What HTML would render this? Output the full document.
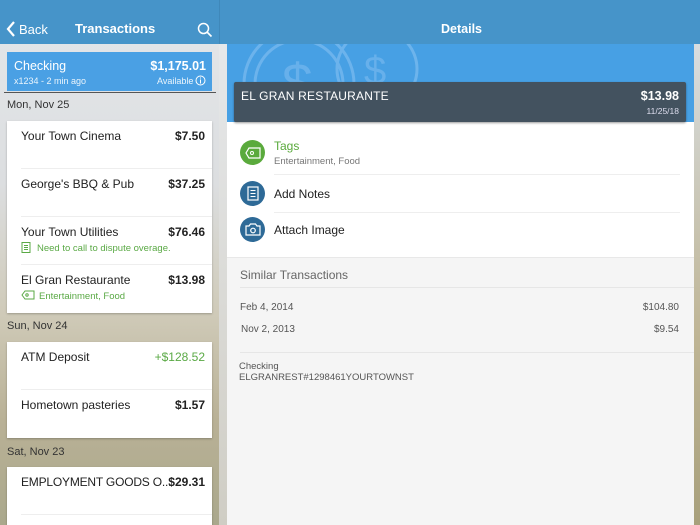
<!DOCTYPE html>
<html><head><meta charset="utf-8"><style>
*{margin:0;padding:0;box-sizing:border-box}
html,body{width:700px;height:525px;overflow:hidden}
body{font-family:"Liberation Sans",sans-serif;position:relative;background:#ddd}
.abs{position:absolute}
.left{left:0;top:0;width:219px;height:525px;background:linear-gradient(#e4e7ea 0%,#dcdee0 35%,#cfcab8 60%,#b9b196 80%,#aaa88c 100%)}
.sep{left:219px;top:44px;width:8px;height:481px;background:linear-gradient(#e6e8ea,#cfcdc4)}
.topbar{left:0;top:0;width:700px;height:44px;background:#4694c9}
.card{position:absolute;left:7px;width:205px;background:#fff;box-shadow:0 1px 2px rgba(0,0,0,.25)}
.row{position:relative;height:48px;border-bottom:1px solid #eee;margin-left:14px}
.row:last-child{border-bottom:none}
.row .n{position:absolute;left:0;top:8px;font-size:12px;color:#222}
.row .a{position:absolute;right:7px;top:8px;font-size:12px;color:#222;font-weight:bold}
.row .s{position:absolute;left:0;top:25px;font-size:9.5px;color:#5aa945}
.date{position:absolute;left:7px;font-size:11px;color:#333}
</style></head><body>
<div class="abs left"></div>
<div class="abs sep"></div>
<div class="abs" style="left:694px;top:44px;width:6px;height:481px;background:linear-gradient(#d8dde0,#bfb595 60%,#a8a07c)"></div>
<div class="abs topbar"></div>
<div class="abs" style="left:219px;top:0;width:1px;height:44px;background:#3f88ba"></div>
<svg class="abs" style="left:6px;top:21px" width="10" height="16"><path d="M8 1 L2 8 L8 15" stroke="#fff" stroke-width="2.2" fill="none"/></svg>
<div class="abs" style="left:19px;top:22px;font-size:13px;color:#fff">Back</div>
<div class="abs" style="left:75px;top:21px;font-size:13px;color:#fff;font-weight:bold">Transactions</div>
<svg class="abs" style="left:197px;top:22px" width="16" height="16"><circle cx="6.5" cy="6.5" r="5" stroke="#fff" stroke-width="1.5" fill="none"/><path d="M10 10 L14.5 14.5" stroke="#fff" stroke-width="1.6"/></svg>
<div class="abs" style="left:441px;top:22px;font-size:12.5px;color:#fff;font-weight:bold">Details</div>

<div class="abs" style="left:7px;top:52px;width:205px;height:39px;background:#4aa0e4"></div>
<div class="abs" style="left:14px;top:59px;font-size:12.5px;color:#fff">Checking</div>
<div class="abs" style="left:14px;top:76px;font-size:9px;color:#eaf4fc">x1234 - 2 min ago</div>
<div class="abs" style="right:494px;top:59px;font-size:12.5px;color:#fff;font-weight:bold">$1,175.01</div>
<div class="abs" style="left:157px;top:76px;font-size:9px;color:#eaf4fc">Available</div>
<svg class="abs" style="left:195px;top:75px" width="11" height="11"><circle cx="5.5" cy="5.5" r="4.5" stroke="#fff" fill="none"/><path d="M5.5 4.5v4M5.5 2.5v1" stroke="#fff"/></svg>
<div class="abs" style="left:4px;top:92px;width:212px;height:1px;background:#555"></div>

<div class="date" style="top:99px">Mon, Nov 25</div>
<div class="card" style="top:121px">
<div class="row"><span class="n">Your Town Cinema</span><span class="a">$7.50</span></div>
<div class="row"><span class="n">George's BBQ &amp; Pub</span><span class="a">$37.25</span></div>
<div class="row"><span class="n">Your Town Utilities</span><span class="a">$76.46</span><span class="s"><svg width="10" height="11" style="vertical-align:-2px;margin-right:6px"><rect x="1" y="0.5" width="8" height="10" stroke="#5aa945" fill="none"/><path d="M3 3.5h4M3 5.5h4M3 7.5h4" stroke="#5aa945"/></svg>Need to call to dispute overage.</span></div>
<div class="row"><span class="n">El Gran Restaurante</span><span class="a">$13.98</span><span class="s"><svg width="14" height="10" style="vertical-align:-1px;margin-right:4px"><path d="M4 1h9v8H4L1 5z" stroke="#5aa945" fill="none"/><circle cx="6" cy="5" r="1.2" stroke="#5aa945" fill="none"/></svg>Entertainment, Food</span></div>
</div>
<div class="date" style="top:320px">Sun, Nov 24</div>
<div class="card" style="top:342px">
<div class="row"><span class="n">ATM Deposit</span><span class="a" style="color:#5aa945;font-weight:normal">+$128.52</span></div>
<div class="row"><span class="n">Hometown pasteries</span><span class="a">$1.57</span></div>
</div>
<div class="date" style="top:446px">Sat, Nov 23</div>
<div class="card" style="top:467px;height:58px;overflow:hidden">
<div class="row" style="border-bottom:1px solid #eee"><span class="n" style="letter-spacing:-.2px">EMPLOYMENT GOODS O...</span><span class="a">$29.31</span></div>
</div>

<div class="abs" style="left:227px;top:44px;width:467px;height:481px;background:#f5f5f5"></div>
<div class="abs" style="left:227px;top:44px;width:467px;height:78px;background:#47a0e4;overflow:hidden">
<svg width="467" height="78"><g fill="none" stroke="#7dbcf0" stroke-width="3" opacity=".7"><circle cx="72" cy="40" r="55"/><circle cx="72" cy="40" r="44"/><circle cx="150" cy="25" r="40"/></g><text x="55" y="58" font-size="55" fill="#7dbcf0" opacity=".6" font-family="Liberation Sans">$</text><text x="137" y="40" font-size="40" fill="#7dbcf0" opacity=".6" font-family="Liberation Sans">$</text></svg>
</div>
<div class="abs" style="left:227px;top:122px;width:467px;height:136px;background:#fff;border-bottom:1px solid #e8e8e8"></div>
<div class="abs" style="left:234px;top:82px;width:452px;height:40px;background:#43525f;border-radius:2px;box-shadow:0 1px 2px rgba(0,0,0,.4)"></div>
<div class="abs" style="left:241px;top:89px;font-size:12px;color:#fff;letter-spacing:.2px">EL GRAN RESTAURANTE</div>
<div class="abs" style="right:21px;top:89px;font-size:12.5px;color:#fff;font-weight:bold">$13.98</div>
<div class="abs" style="right:21px;top:106px;font-size:8.5px;color:#dde">11/25/18</div>

<div class="abs" style="left:240px;top:140px;width:25px;height:25px;border-radius:50%;background:#5aaa3c"></div>
<svg class="abs" style="left:245px;top:147px" width="16" height="12"><path d="M4 1h11v10H4L1 6z" stroke="#fff" stroke-width="1.2" fill="none"/><circle cx="7" cy="6" r="1.5" stroke="#fff" fill="none"/></svg>
<div class="abs" style="left:274px;top:139px;font-size:12px;color:#5aaa3c">Tags</div>
<div class="abs" style="left:274px;top:156px;font-size:9.5px;color:#777">Entertainment, Food</div>
<div class="abs" style="left:274px;top:174px;width:406px;height:1px;background:#eee"></div>
<div class="abs" style="left:240px;top:181px;width:25px;height:25px;border-radius:50%;background:#2e6a97"></div>
<svg class="abs" style="left:247px;top:186px" width="12" height="15"><rect x="1" y="1" width="10" height="13" stroke="#fff" stroke-width="1.2" fill="none"/><path d="M3.5 4.5h5M3.5 7.5h5M3.5 10.5h5" stroke="#fff"/></svg>
<div class="abs" style="left:274px;top:187px;font-size:12px;color:#222">Add Notes</div>
<div class="abs" style="left:274px;top:212px;width:406px;height:1px;background:#eee"></div>
<div class="abs" style="left:240px;top:217px;width:25px;height:25px;border-radius:50%;background:#2e6a97"></div>
<svg class="abs" style="left:245px;top:223px" width="16" height="13"><path d="M1 3h3l1.5-2h5L12 3h3v9H1z" stroke="#fff" stroke-width="1.2" fill="none"/><circle cx="8" cy="7.5" r="2.3" stroke="#fff" stroke-width="1.2" fill="none"/></svg>
<div class="abs" style="left:274px;top:223px;font-size:12px;color:#222">Attach Image</div>

<div class="abs" style="left:240px;top:268px;font-size:12px;color:#666">Similar Transactions</div>
<div class="abs" style="left:240px;top:287px;width:454px;height:1px;background:#e6e6e6"></div>
<div class="abs" style="left:240px;top:302px;font-size:10px;color:#555">Feb 4, 2014</div>
<div class="abs" style="right:21px;top:302px;font-size:10px;color:#555">$104.80</div>
<div class="abs" style="left:241px;top:324px;font-size:10px;color:#555">Nov 2, 2013</div>
<div class="abs" style="right:21px;top:324px;font-size:10px;color:#555">$9.54</div>
<div class="abs" style="left:240px;top:352px;width:454px;height:1px;background:#e6e6e6"></div>
<div class="abs" style="left:239px;top:361px;font-size:9.5px;color:#555;line-height:11px">Checking<br>ELGRANREST#1298461YOURTOWNST</div>
</body></html>
